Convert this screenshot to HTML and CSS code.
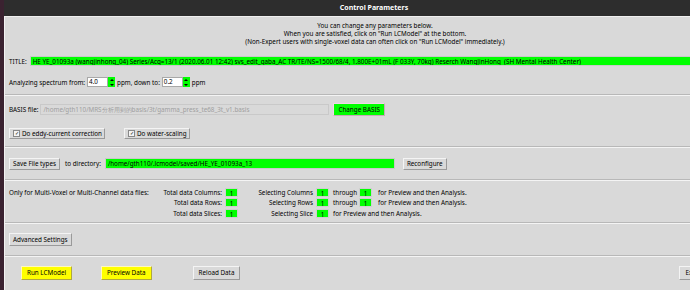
FILE: index.html
```html
<!DOCTYPE html>
<html lang="en">
<head>
  <meta charset="UTF-8">
  <title>Control Parameters</title>
  <link rel="stylesheet" href="styles.css">
</head>
<body>
  <div class="edge"></div>
  <div class="window">
    <div class="titlebar">Control Parameters</div>

    <!-- Intro and title -->
    <div class="section top">
      <div class="intro">
        <div>You can change any parameters below.</div>
        <div>When you are satisfied, click on "Run LCModel" at the bottom.</div>
        <div>(Non-Expert users with single-voxel data can often click on "Run LCModel" immediately.)</div>
      </div>
      <div class="row title-row">
        <span class="label">TITLE:</span>
        <span class="field green wide">HE YE_01093a (wangjinhong_04) Series/Acq=13/1 (2020.06.01 12:42) svs_edit_gaba_AC TR/TE/NS=1500/68/4, 1.800E+01mL (F 033Y, 70kg) Reserch WangJinHong&nbsp; (SH Mental Health Center)</span>
      </div>
      <div class="row ppm-row">
        <span class="label">Analyzing spectrum from:</span>
        <span class="spin"><span class="entry">4.0</span><span class="arrows"><i class="up"></i><i class="down"></i></span></span>
        <span class="label">ppm, down to:</span>
        <span class="spin"><span class="entry">0.2</span><span class="arrows"><i class="up"></i><i class="down"></i></span></span>
        <span class="label">ppm</span>
      </div>
    </div>
    <hr class="sep">

    <!-- Basis -->
    <div class="section basis">
      <div class="row basis-row">
        <span class="label">BASIS file:</span>
        <span class="field disabled">/home/gth110/MRS分析用到的basis/3t/gamma_press_te68_3t_v1.basis</span>
        <button class="button green">Change BASIS</button>
      </div>
      <div class="row check-row">
        <button class="button check eddy"><span class="box">✓</span>Do eddy-current correction</button>
        <button class="button check"><span class="box">✓</span>Do water-scaling</button>
      </div>
    </div>
    <hr class="sep">

    <!-- Save -->
    <div class="section save">
      <div class="row save-row">
        <button class="button">Save File types</button>
        <span class="label">to directory:</span>
        <span class="field green dir">/home/gth110/.lcmodel/saved/HE_YE_01093a_13</span>
        <button class="button">Reconfigure</button>
      </div>
    </div>
    <hr class="sep">

    <!-- Multi-voxel -->
    <div class="section multi">
      <span class="only">Only for Multi-Voxel or Multi-Channel data files:</span>
      <span class="r">Total data Columns:</span><span class="num">1</span>
      <span class="r">Selecting Columns</span><span class="num">1</span>
      <span class="thr">through</span><span class="num n2">1</span>
      <span class="tail">for Preview and then Analysis.</span>

      <span></span>
      <span class="r">Total data Rows:</span><span class="num">1</span>
      <span class="r">Selecting Rows</span><span class="num">1</span>
      <span class="thr">through</span><span class="num n2">1</span>
      <span class="tail">for Preview and then Analysis.</span>

      <span></span>
      <span class="r">Total data Slices:</span><span class="num">1</span>
      <span class="r">Selecting Slice</span><span class="num">1</span>
      <span class="thr span">for Preview and then Analysis.</span>
    </div>
    <hr class="sep">

    <div class="section adv">
      <button class="button">Advanced Settings</button>
    </div>
    <hr class="sep">

    <!-- Bottom actions -->
    <div class="section actions">
      <button class="button yellow run">Run LCModel</button>
      <button class="button yellow preview">Preview Data</button>
      <button class="button reload">Reload Data</button>
      <button class="button exit">Exit</button>
    </div>
  </div>
</body>
</html>
```

FILE: styles.css
```css
body {
  margin: 0;
  width: 690px;
  height: 290px;
  overflow: hidden;
  background: #3a2230;
  display: flex;
  font-family: 'Noto Sans', sans-serif;
  font-size: 6.3px;
  color: #000;
}

.edge {
  width: 4px;
  flex: none;
}

.window {
  width: 740px;
  flex: none;
  background: #d9d9d9;
  border-left: 1px solid #f2f2f2;
  display: flex;
  flex-direction: column;
}

.titlebar {
  height: 16px;
  line-height: 16px;
  background: #2d2d2d;
  color: #fff;
  font-weight: bold;
  font-size: 7px;
  text-align: center;
  border-bottom: 1px solid #f0f0f0;
  margin-left: -1px;
  padding-right: 1px;
}

.section {
  padding: 0 4px;
}

.row {
  display: flex;
  align-items: center;
  white-space: nowrap;
}

.label {
  margin-right: 2px;
}

/* Intro */
.top {
  padding-top: 5px;
}

.intro {
  text-align: center;
  line-height: 8px;
}

.title-row {
  margin-top: 10px;
  height: 10px;
}

.field {
  height: 10px;
  line-height: 10px;
  padding: 0 2px;
  border: 1px solid #c9c9c9;
  box-sizing: border-box;
  white-space: nowrap;
  overflow: hidden;
}

.green {
  background: #00ff00;
}

.field.wide {
  flex: 1;
  margin-left: 1px;
}

.ppm-row {
  margin-top: 11px;
  height: 10px;
}

.spin {
  display: flex;
  height: 10px;
  margin-right: 2px;
}

.entry {
  width: 21px;
  background: #fff;
  border: 1px solid #a8a8a8;
  box-sizing: border-box;
  line-height: 8px;
  padding-left: 1px;
}

.arrows {
  width: 7px;
  background: #00ff00;
  display: flex;
  flex-direction: column;
  justify-content: space-around;
  align-items: center;
}

.arrows i {
  width: 0;
  height: 0;
  border-left: 2px solid transparent;
  border-right: 2px solid transparent;
}

.arrows .up {
  border-bottom: 2px solid #000;
}

.arrows .down {
  border-top: 2px solid #000;
}

/* Separators */
.sep {
  margin: 7px 0 0;
  border: none;
  border-top: 1px solid #b8b8b8;
  border-bottom: 1px solid #f4f4f4;
  height: 0;
}

/* Buttons */
.button {
  font: inherit;
  color: #000;
  background: #d9d9d9;
  border: 1px solid;
  border-color: #f4f4f4 #9a9a9a #9a9a9a #f4f4f4;
  padding: 0 3px;
  margin: 0;
  height: 12px;
  line-height: 10px;
  white-space: nowrap;
}

.button.green {
  background: #00ff00;
  border-color: #f0d8e8 #c8a8b8 #c8a8b8 #f0d8e8;
}

.button.yellow {
  background: #ffff00;
  border-color: #fff7c0 #b0a840 #b0a840 #fff7c0;
}

/* Basis */
.basis-row {
  margin-top: 7px;
  height: 13px;
}

.field.disabled {
  width: 289px;
  height: 11px;
  color: #a0a0a0;
  margin-right: 4px;
}

.basis-row .button {
  height: 13px;
  padding: 0 4px;
}

.check-row {
  margin-top: 12px;
  height: 11px;
}

.check {
  height: 11px;
  display: flex;
  align-items: center;
  padding: 0 2px 0 3px;
}

.check .box {
  width: 5px;
  height: 5px;
  border: 1px solid #888;
  background: #f4f4f4;
  font-size: 5px;
  line-height: 5px;
  text-align: center;
  margin-right: 2px;
}

.check.eddy {
  margin-right: 19px;
}

/* Save */
.save-row {
  margin-top: 10px;
  height: 11px;
}

.save-row .button {
  height: 12px;
}

.save-row .label {
  margin: 0 4px 0 5px;
}

.field.dir {
  width: 290px;
  height: 11px;
  margin-right: 8px;
}

.save + .sep {
  margin-top: 10px;
}

/* Multi-voxel grid */
.multi {
  display: grid;
  grid-template-columns: 141px 72px 16px 75px 16px 30px 13px auto;
  grid-auto-rows: 10px;
  row-gap: 0.6px;
  margin-top: 6px;
  align-items: center;
  white-space: nowrap;
}

.multi .r {
  text-align: right;
}

.multi .num {
  margin-left: 3px;
  height: 9px;
  line-height: 9px;
  background: #00ff00;
  border: 1px solid #cfcfcf;
  box-sizing: border-box;
  text-align: center;
}

.multi .num.n2 {
  margin-left: 0;
}

.multi .thr {
  padding-left: 4px;
}

.multi .thr.span {
  grid-column: 6 / 9;
}

.multi .tail {
  padding-left: 6px;
}

.multi + .sep {
  margin-top: 4px;
}

/* Advanced */
.adv {
  padding-top: 9px;
}

.adv .button {
  height: 13px;
}

.adv + .sep {
  margin-top: 9px;
}

/* Actions */
.actions {
  display: flex;
  padding-top: 9px;
  padding-left: 16px;
}

.actions .button {
  height: 14px;
  padding: 0 5px;
}

.preview {
  margin-left: 29px;
}

.reload {
  margin-left: 41px;
}

.exit {
  margin-left: 439px;
}
```
